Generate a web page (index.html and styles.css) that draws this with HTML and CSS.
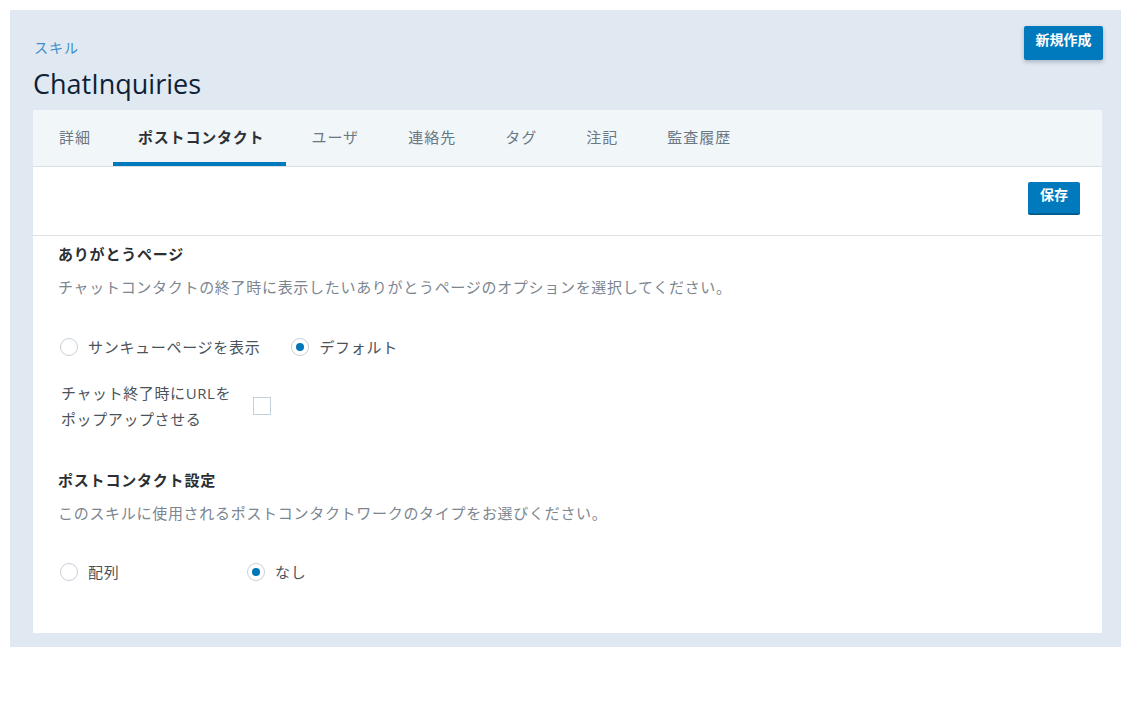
FILE: index.html
```html
<!DOCTYPE html>
<html lang="ja">
<head>
<meta charset="utf-8">
<title>ChatInquiries</title>
<link rel="stylesheet" href="styles.css">
</head>
<body>
<div class="page">
  <header class="page-header">
    <div class="titles">
      <div class="breadcrumb">スキル</div>
      <h1 class="title">ChatInquiries</h1>
    </div>
    <button class="btn btn-create">新規作成</button>
  </header>
  <div class="card">
    <nav class="tabs">
      <div class="tab">詳細</div>
      <div class="tab active">ポストコンタクト</div>
      <div class="tab">ユーザ</div>
      <div class="tab">連絡先</div>
      <div class="tab">タグ</div>
      <div class="tab">注記</div>
      <div class="tab">監査履歴</div>
    </nav>
    <div class="toolbar">
      <button class="btn btn-save">保存</button>
    </div>
    <div class="content">
      <h2 class="section-title">ありがとうページ</h2>
      <p class="desc">チャットコンタクトの終了時に表示したいありがとうページのオプションを選択してください。</p>
      <div class="radio-row row-thanks">
        <label class="radio-item"><span class="radio"></span><span class="label">サンキューページを表示</span></label>
        <label class="radio-item"><span class="radio checked"></span><span class="label">デフォルト</span></label>
      </div>
      <div class="check-row">
        <div class="check-label">チャット終了時にURLを<br>ポップアップさせる</div>
        <span class="checkbox"></span>
      </div>
      <h2 class="section-title second">ポストコンタクト設定</h2>
      <p class="desc desc2">このスキルに使用されるポストコンタクトワークのタイプをお選びください。</p>
      <div class="radio-row row-post">
        <label class="radio-item wide"><span class="radio"></span><span class="label">配列</span></label>
        <label class="radio-item"><span class="radio checked"></span><span class="label">なし</span></label>
      </div>
    </div>
  </div>
</div>
</body>
</html>
```

FILE: styles.css
```css
* { box-sizing: border-box; }
html, body { margin: 0; padding: 0; background: #ffffff; }
body {
  font-family: "Open Sans", "Noto Sans CJK JP", sans-serif;
  color: #333a40;
}
.page {
  margin: 10px 12px 0 10px;
  width: 1111px;
  background: #e0e8f1;
  padding: 16px 18px 14px 23px;
}
.page-header {
  display: flex;
  justify-content: space-between;
  align-items: flex-start;
  margin-bottom: 8px;
}
.titles { padding-top: 12px; }
.breadcrumb {
  font-size: 14px;
  line-height: 20px;
  color: #3d8ccb;
  letter-spacing: 1px;
  padding-left: 1px;
}
.title {
  margin: 8px 0 0 0;
  font-size: 27px;
  line-height: 36px;
  font-weight: 400;
  color: #0e1f36;
}
.btn {
  font-family: "Open Sans", "Noto Sans CJK JP", sans-serif;
  background: #0079bd;
  color: #ffffff;
  border: 0;
  border-radius: 2px;
  font-weight: 700;
  font-size: 14px;
  cursor: pointer;
}
.btn-create {
  width: 79px;
  height: 34px;
  padding: 0 0 9px 0;
  box-shadow: 0 2px 4px rgba(40, 60, 90, 0.3);
}
.btn-save {
  width: 52px;
  height: 33px;
  padding: 0 0 8px 0;
  border-bottom: 2px solid #005d92;
}
.card {
  background: #ffffff;
  margin-right: 1px;
  padding-bottom: 49px;
}
.tabs {
  display: flex;
  height: 57px;
  background: #f1f6f9;
  border-bottom: 1px solid #d8e0e6;
}
.tab {
  display: flex;
  align-items: center;
  padding: 0 24px 0 25px;
  height: 56px;
  font-size: 15px;
  letter-spacing: 1px;
  color: #6b7783;
  border-bottom: 4px solid transparent;
}
.tab:first-child { padding-left: 26px; padding-right: 22px; }
.tab.active {
  color: #2d3136;
  font-weight: 700;
  border-bottom-color: #0079bd;
  letter-spacing: 0.8px;
  padding: 0 22px 0 25px;
}
.toolbar {
  display: flex;
  justify-content: flex-end;
  height: 69px;
  padding: 15px 22px 0 0;
  border-bottom: 1px solid #dce2e7;
}
.content { padding: 7px 25px 0 25px; }
.section-title {
  margin: 0;
  font-size: 15px;
  line-height: 22px;
  font-weight: 700;
  color: #2b2f34;
  letter-spacing: 0.8px;
}
.section-title.second { margin-top: 37px; }
.desc {
  margin: 11px 0 0 0;
  font-size: 15px;
  line-height: 22px;
  color: #7c8690;
  letter-spacing: 0.7px;
}
.desc2 { margin-top: 11px; }
.radio-row {
  display: flex;
  align-items: center;
  margin-top: 37px;
  height: 24px;
  padding-left: 2px;
}
.row-post { margin-top: 36px; }
.radio-item {
  display: flex;
  align-items: center;
  gap: 10px;
  margin-right: 31px;
  font-size: 15px;
  line-height: 24px;
  color: #4a525a;
  letter-spacing: 0.7px;
}
.radio-item.wide { width: 187px; margin-right: 0; }
.radio {
  width: 18px;
  height: 18px;
  border-radius: 50%;
  border: 1px solid #c8d1d9;
  background: #ffffff;
  display: flex;
  align-items: center;
  justify-content: center;
}
.radio.checked::after {
  content: "";
  width: 8px;
  height: 8px;
  border-radius: 50%;
  background: #0075b8;
}
.check-row {
  display: flex;
  align-items: center;
  margin-top: 21px;
  padding-left: 3px;
}
.check-label {
  width: 192px;
  font-size: 15px;
  line-height: 26px;
  color: #4a525a;
  letter-spacing: 0.6px;
}
.checkbox {
  width: 18px;
  height: 18px;
  border: 1px solid #c3d1db;
  background: #ffffff;
}
```
